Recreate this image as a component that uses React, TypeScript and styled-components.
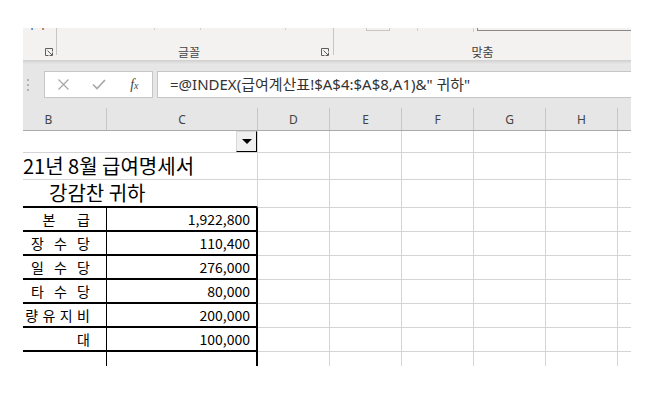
import styled, { createGlobalStyle } from 'styled-components';

const COLUMNS = '116px 151px repeat(6, 72px)';
const GRID_LINE = '#d4d4d4';
const UI_FONT = `'Noto Sans', 'Noto Sans CJK KR', sans-serif`;
const SHEET_FONT = `'Noto Sans CJK KR', 'Noto Sans', sans-serif`;

const GlobalStyle = createGlobalStyle`
  html, body {
    margin: 0;
    padding: 0;
    background: #fff;
  }
  body {
    font-family: ${UI_FONT};
  }
`;

type Edge = 'grid' | 'thin' | 'thick';

const edgeStyle = (edge: Edge = 'grid') =>
  edge === 'thick' ? '2px solid #000' : edge === 'thin' ? '1px solid #000' : `1px solid ${GRID_LINE}`;

const S = {
  Window: styled.div`
    display: flex;
    flex-direction: column;
    width: 608px;
    height: 338px;
    margin: 28px 0 0 23px;
    overflow: hidden;
    background: #fff;
  `,

  Ribbon: styled.div`
    display: flex;
    flex-shrink: 0;
    height: 32px;
    background: #f3f2f1;
    overflow: hidden;
  `,

  Group: styled.div<{ $width?: number }>`
    display: flex;
    flex-direction: column;
    justify-content: space-between;
    ${({ $width }) => ($width ? `width: ${$width}px; flex-shrink: 0;` : 'flex: 1;')}
  `,

  Stubs: styled.div`
    display: flex;
    align-items: flex-start;
    height: 5px;
  `,

  CutText: styled.span`
    margin-top: -10px;
    font-size: 12px;
    line-height: 14px;
    color: #444;
    white-space: nowrap;
  `,

  Tick: styled.span<{ $left: number; $height?: number }>`
    width: 1px;
    height: ${({ $height }) => $height ?? 2}px;
    margin-left: ${({ $left }) => $left}px;
    background: #d2d0ce;
  `,

  ButtonStub: styled.span<{ $left: number }>`
    width: 22px;
    height: 2px;
    margin-left: ${({ $left }) => $left}px;
    border: 1px solid #c8c6c4;
    border-top: none;
  `,

  ComboStub: styled.span<{ $left: number }>`
    flex: 1;
    height: 2px;
    margin-left: ${({ $left }) => $left}px;
    border-left: 1px solid #8a8886;
    border-bottom: 1px solid #8a8886;
  `,

  LabelRow: styled.div`
    display: flex;
    align-items: center;
    height: 14px;
    margin-bottom: 1px;
  `,

  GroupLabel: styled.span`
    flex: 1;
    font-family: ${SHEET_FONT};
    font-size: 12px;
    line-height: 14px;
    text-align: center;
    color: #444;
  `,

  Launcher: styled.svg<{ $right: number }>`
    flex-shrink: 0;
    margin-right: ${({ $right }) => $right}px;
  `,

  Separator: styled.div`
    flex-shrink: 0;
    width: 1px;
    height: 27px;
    background: #c8c6c4;
  `,

  Shadow: styled.div`
    flex-shrink: 0;
    height: 4px;
    background: linear-gradient(#cfcfcf, #e6e6e6);
  `,

  FormulaBar: styled.div`
    display: flex;
    align-items: center;
    flex-shrink: 0;
    padding: 7px 0 10px;
    background: #e6e6e6;
  `,

  Grip: styled.div`
    display: flex;
    flex-direction: column;
    gap: 3px;
    width: 17px;
    padding-left: 4px;
  `,

  GripDot: styled.span`
    width: 2px;
    height: 2px;
    background: #b3b3b3;
  `,

  IconBox: styled.div`
    display: flex;
    box-sizing: border-box;
    width: 109px;
    height: 27px;
    padding-left: 1px;
    border: 1px solid #c6c6c6;
    background: #fff;
  `,

  IconSlot: styled.span`
    display: flex;
    align-items: center;
    justify-content: center;
    width: 36px;
  `,

  Fx: styled.span`
    font-family: 'Liberation Serif', serif;
    font-style: italic;
    font-size: 14px;
    color: #444;

    small {
      font-size: 10px;
    }
  `,

  FormulaInput: styled.div`
    flex: 1;
    box-sizing: border-box;
    height: 27px;
    margin-left: 4px;
    margin-right: -2px;
    padding-left: 12px;
    border: 1px solid #c6c6c6;
    background: #fff;
    font-size: 15px;
    line-height: 25px;
    color: #333;
    white-space: nowrap;
  `,

  ColumnHeader: styled.div`
    display: grid;
    flex-shrink: 0;
    grid-template-columns: ${COLUMNS};
    box-sizing: border-box;
    height: 23px;
    margin-left: -32px;
    border-bottom: 1px solid #ababab;
    background: #e6e6e6;
  `,

  HeaderCell: styled.div`
    display: flex;
    align-items: center;
    justify-content: center;
    border-right: 1px solid #c6c6c6;
    font-size: 12px;
    color: #444;
  `,

  Sheet: styled.div`
    display: grid;
    grid-template-columns: ${COLUMNS};
    grid-template-rows: 22px 27px 28px repeat(7, 24px);
    margin-left: -32px;
    font-family: ${SHEET_FONT};
    color: #000;
  `,

  Cell: styled.div<{ $span?: number; $right?: Edge; $bottom?: Edge; $end?: boolean }>`
    display: flex;
    align-items: center;
    justify-content: ${({ $end }) => ($end ? 'flex-end' : 'flex-start')};
    box-sizing: border-box;
    min-width: 0;
    overflow: hidden;
    grid-column: span ${({ $span }) => $span ?? 1};
    border-right: ${({ $right }) => edgeStyle($right)};
    border-bottom: ${({ $bottom }) => edgeStyle($bottom)};
  `,

  Title: styled.span<{ $indent: number }>`
    align-self: flex-end;
    padding: 0 0 3px ${({ $indent }) => $indent}px;
    font-size: 20px;
    line-height: 1;
    white-space: nowrap;
  `,

  DropButton: styled.span`
    display: flex;
    align-items: center;
    justify-content: center;
    box-sizing: border-box;
    width: 21px;
    height: 21px;
    border: 1px solid;
    border-color: #d8d8d8 #000 #000 #d8d8d8;
    background: #f0f0f0;
  `,

  Arrow: styled.span`
    width: 0;
    height: 0;
    border-left: 5px solid transparent;
    border-right: 5px solid transparent;
    border-top: 5px solid #000;
  `,

  Spread: styled.span`
    display: flex;
    justify-content: space-between;
    width: 82px;
    margin-right: 16px;
    font-size: 14px;
    line-height: 1;
  `,

  Amount: styled.span`
    padding-right: 6px;
    font-size: 14px;
    line-height: 1;
  `,
};

const PAY_ITEMS = [
  { label: '기본급', amount: '1,922,800' },
  { label: '출장수당', amount: '110,400' },
  { label: '휴일수당', amount: '276,000' },
  { label: '기타수당', amount: '80,000' },
  { label: '차량유지비', amount: '200,000' },
  { label: '식대', amount: '100,000' },
  { label: '', amount: '' },
];

const EXTRA_COLUMNS = ['D', 'E', 'F', 'G', 'H', 'I'];

function Launcher({ right }: { right: number }) {
  return (
    <S.Launcher $right={right} width="8" height="8" viewBox="0 0 8 8" fill="none" stroke="#605e5c">
      <path d="M3.5 7.5H0.5V0.5H7.5V3.5" />
      <path d="M2.5 2.5L7 7M7.5 4.5V7.5H4.5" />
    </S.Launcher>
  );
}

function EmptyCells() {
  return (
    <>
      {EXTRA_COLUMNS.map((col) => (
        <S.Cell key={col} />
      ))}
    </>
  );
}

function App() {
  return (
    <>
      <GlobalStyle />
      <S.Window>
        <S.Ribbon>
          <S.Group $width={33}>
            <S.Stubs>
              <S.CutText>서식</S.CutText>
            </S.Stubs>
            <S.LabelRow>
              <S.GroupLabel />
              <Launcher right={3} />
            </S.LabelRow>
          </S.Group>
          <S.Separator />
          <S.Group $width={276}>
            <S.Stubs>
              <S.Tick $left={97} />
              <S.Tick $left={45} />
              <S.Tick $left={84} />
            </S.Stubs>
            <S.LabelRow>
              <S.GroupLabel>글꼴</S.GroupLabel>
              <Launcher right={4} />
            </S.LabelRow>
          </S.Group>
          <S.Separator />
          <S.Group>
            <S.Stubs>
              <S.ButtonStub $left={32} />
              <S.Tick $left={27} $height={3} />
              <S.Tick $left={55} $height={4} />
              <S.ComboStub $left={3} />
            </S.Stubs>
            <S.LabelRow>
              <S.GroupLabel>맞춤</S.GroupLabel>
            </S.LabelRow>
          </S.Group>
        </S.Ribbon>
        <S.Shadow />

        <S.FormulaBar>
          <S.Grip>
            <S.GripDot />
            <S.GripDot />
            <S.GripDot />
          </S.Grip>
          <S.IconBox>
            <S.IconSlot>
              <svg width="11" height="11" viewBox="0 0 11 11" stroke="#a6a6a6" strokeWidth="1.2">
                <path d="M0.5 0.5L10.5 10.5M10.5 0.5L0.5 10.5" />
              </svg>
            </S.IconSlot>
            <S.IconSlot>
              <svg width="14" height="11" viewBox="0 0 14 11" fill="none" stroke="#a6a6a6" strokeWidth="1.6">
                <path d="M1 5.5L5 9.5L13 1" />
              </svg>
            </S.IconSlot>
            <S.IconSlot>
              <S.Fx>
                f<small>x</small>
              </S.Fx>
            </S.IconSlot>
          </S.IconBox>
          <S.FormulaInput>{'=@INDEX(급여계산표!$A$4:$A$8,A1)&" 귀하"'}</S.FormulaInput>
        </S.FormulaBar>

        <S.ColumnHeader>
          {['B', 'C', ...EXTRA_COLUMNS].map((col) => (
            <S.HeaderCell key={col}>{col}</S.HeaderCell>
          ))}
        </S.ColumnHeader>

        <S.Sheet>
          <S.Cell $span={2} $end>
            <S.DropButton>
              <S.Arrow />
            </S.DropButton>
          </S.Cell>
          <EmptyCells />

          <S.Cell $span={2}>
            <S.Title $indent={32}>21년 8월 급여명세서</S.Title>
          </S.Cell>
          <EmptyCells />

          <S.Cell $span={2} $bottom="thick">
            <S.Title $indent={58}>강감찬 귀하</S.Title>
          </S.Cell>
          <EmptyCells />

          {PAY_ITEMS.map((item, i) => (
            <>
              <S.Cell key={`b${i}`} $right="thin" $bottom="thick" $end>
                <S.Spread>
                  {item.label.split('').map((ch, j) => (
                    <span key={j}>{ch}</span>
                  ))}
                </S.Spread>
              </S.Cell>
              <S.Cell key={`c${i}`} $right="thick" $bottom="thick" $end>
                <S.Amount>{item.amount}</S.Amount>
              </S.Cell>
              <EmptyCells key={`e${i}`} />
            </>
          ))}
        </S.Sheet>
      </S.Window>
    </>
  );
}

export default App;
